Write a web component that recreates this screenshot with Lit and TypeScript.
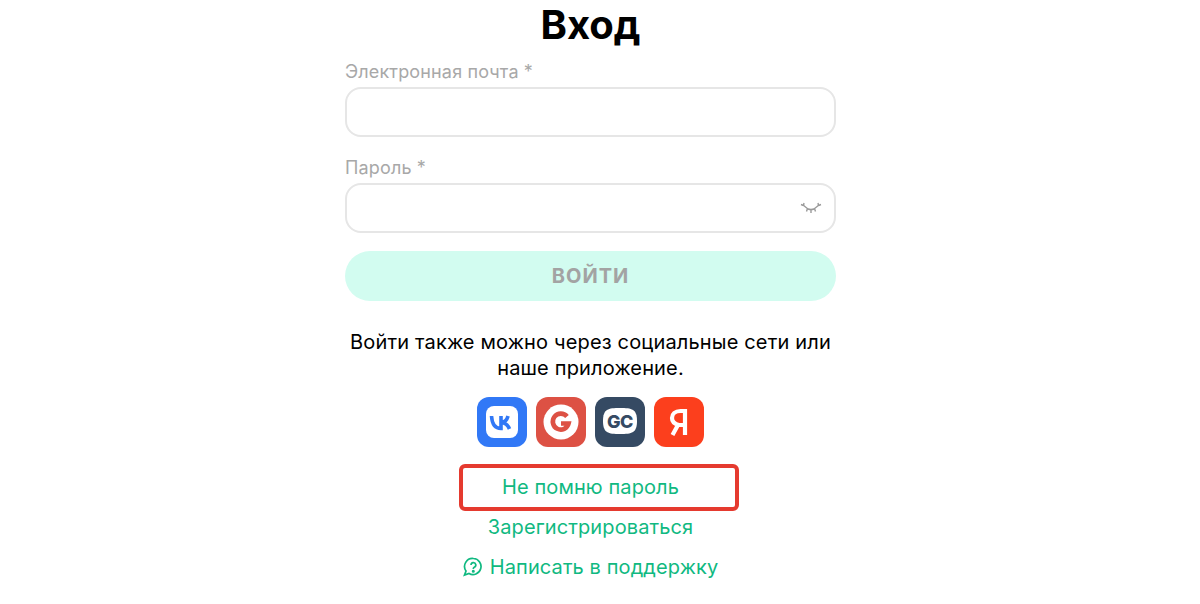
import { LitElement, html, css } from "lit";
import { customElement } from "lit/decorators.js";

@customElement("app-root")
export class AppRoot extends LitElement {
  static styles = css`
    :host { display: block; background: #fff; font-family: Inter, "Noto Sans", sans-serif; height: 604px; overflow: hidden; }
    .page { display: flex; justify-content: center; padding-right: 19px; }
    .col { width: 491px; display: flex; flex-direction: column; }
    h1 { margin: 0; height: 53px; font-size: 40px; line-height: 50px; font-weight: 700; text-align: center; color: #000; }
    label { display: block; font-size: 18px; letter-spacing: .15px; line-height: 22px; height: 26px; margin-top: 8px; color: #a8a8a8; }
    label.second { margin-top: 20px; }
    .field { height: 50px; box-sizing: border-box; border: 2px solid #e6e6e6; border-radius: 16px; display: flex; align-items: center; justify-content: flex-end; padding-right: 12px; }
    .btn { margin-top: 18px; height: 50px; border-radius: 25px; background: #d2fcf0; color: #a3a3a3; font-size: 20px; font-weight: 700; letter-spacing: 1px; display: flex; align-items: center; justify-content: center; }
    .note { margin: 28px 0 0; font-size: 20px; letter-spacing: .16px; line-height: 26px; text-align: center; color: #000; }
    .social { margin-top: 16px; display: flex; justify-content: center; gap: 9px; }
    .social svg { display: block; width: 50px; height: 50px; }
    .gc { font-size: 18px; font-weight: 800; letter-spacing: -.5px; fill: #354a63; font-family: Inter, sans-serif; text-anchor: middle; }
    .links { margin-top: 20px; display: flex; flex-direction: column; align-items: center; position: relative; }
    .links a { height: 40px; display: flex; align-items: center; gap: 7px; color: #10b981; font-size: 20px; letter-spacing: .1px; }
    .mark { position: absolute; left: 114px; top: -3px; width: 280px; height: 47px; box-sizing: border-box; border: 4px solid #e53a2f; border-radius: 6px; }
  `;

  render() {
    return html`
      <div class="page">
      <div class="col">
        <h1>Вход</h1>
        <label>Электронная почта *</label>
        <div class="field"></div>
        <label class="second">Пароль *</label>
        <div class="field">
          <svg width="22" height="12" viewBox="0 0 22 12" fill="none" stroke="#9a9a9a" stroke-width="1.4">
            <path d="M3 3 L8 7 Q11 8 14 7 L19 3" />
            <path d="M3.5 3.5 L1 2.5 M3.5 3.5 L4 1 M7.5 6.5 L6.5 9.5 M11 7.5 V11 M14.5 6.5 L15.5 9.5 M18.5 3.5 L21 2.5 M18.5 3.5 L18 1" />
          </svg>
        </div>
        <div class="btn">ВОЙТИ</div>
        <p class="note">Войти также можно через социальные сети или<br />наше приложение.</p>
        <div class="social">
          <svg viewBox="0 0 50 50">
            <rect width="50" height="50" rx="12" fill="#3178f6" />
            <rect x="9" y="9" width="32" height="32" rx="8" fill="#fff" />
            <path d="M14.5 19 C15 27 18.5 31.5 24 31.5 V19 M24 25.5 C27.5 25.5 30 23 31 19 M24 25.5 C27.5 25.8 31 28 32.5 32" fill="none" stroke="#3178f6" stroke-width="3.6" />
          </svg>
          <svg viewBox="0 0 50 50">
            <rect width="50" height="50" rx="12" fill="#dd5144" />
            <circle cx="25" cy="25" r="17.5" fill="#fff" />
            <path d="M31 19.5 A8 8 0 1 0 32.6 26.5 H25" fill="none" stroke="#dd5144" stroke-width="4.6" />
          </svg>
          <svg viewBox="0 0 50 50">
            <rect width="50" height="50" rx="12" fill="#354a63" />
            <path d="M25 11 C37 11 42 12 42 24 C42 36 37 37 25 37 C13 37 8 36 8 24 C8 12 13 11 25 11 Z" fill="#fff" />
            <text class="gc" x="25" y="30.5">GC</text>
          </svg>
          <svg viewBox="0 0 50 50">
            <rect width="50" height="50" rx="12" fill="#fc3f1d" />
            <path d="M31 38 V14 H26.5 C21 14 18 17 18 21 C18 25 20.5 27 25 28 M24.5 27 L18.5 38 M31 28 H24.5" fill="none" stroke="#fff" stroke-width="4.2" />
          </svg>
        </div>
        <div class="links">
          <a>Не помню пароль</a>
          <a>Зарегистрироваться</a>
          <a>
            <svg width="20" height="20" viewBox="0 0 20 20" fill="none" stroke="#10b981" stroke-width="1.7">
              <path d="M10.5 1.5 A8 8 0 1 1 6 16.4 L1.5 18 L3 14 A8 8 0 0 1 10.5 1.5 Z" />
              <path d="M8 8 A2.4 2.4 0 1 1 11.2 10.3 C10.4 10.7 10.3 11.2 10.3 12" />
              <circle cx="10.3" cy="14.3" r=".7" fill="#10b981" />
            </svg>
            Написать в поддержку
          </a>
          <div class="mark"></div>
        </div>
      </div>
      </div>
    `;
  }
}
